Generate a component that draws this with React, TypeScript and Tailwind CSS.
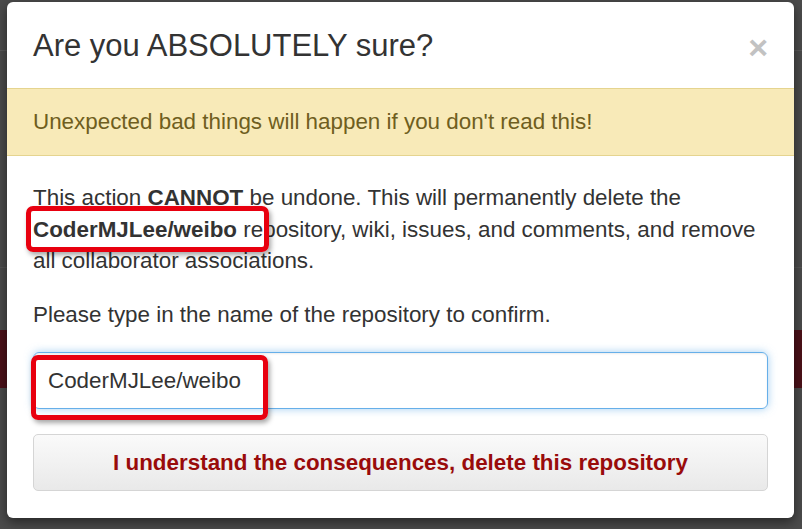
import React from 'react';

export default function App() {
  return (
    <div className="relative h-[529px] w-[802px] overflow-hidden bg-[#4b4b4b] font-['Liberation_Sans',Arial,sans-serif]">
      {/* page behind the overlay */}
      <div className="pt-[50px]">
        <div className="h-px bg-[#5a5a5a]" />
        <div className="mt-[216px] h-px bg-[#555]" />
        <div className="mt-[62px] h-[58px] bg-[#4c1119]" />
      </div>

      {/* modal */}
      <div className="absolute left-[7px] top-[2px] h-[516px] w-[787px] overflow-hidden rounded-[6px] bg-white shadow-[0_4px_12px_rgba(0,0,0,0.5)]">
        <div className="flex h-[86px] items-center justify-between pl-[26px] pr-[26px]">
          <h1 className="text-[31px] leading-none text-[#333]">Are you ABSOLUTELY sure?</h1>
          <span className="mt-[4px] text-[34px] font-bold leading-none text-[#c2c2c2]">×</span>
        </div>

        <div className="flex h-[68px] items-center border-y border-[#e5d48f] bg-[#f8eab8] px-[26px] text-[22.4px] text-[#6f5e20]">
          Unexpected bad things will happen if you don't read this!
        </div>

        <div className="px-[26px] pt-[26px] text-[22.4px] leading-[31.5px] text-[#333]">
          <p>
            This action <strong>CANNOT</strong> be undone. This will permanently delete the{' '}
            <strong>CoderMJLee/weibo</strong> repository, wiki, issues, and comments, and remove all
            collaborator associations.
          </p>
          <p className="mt-[22px]">Please type in the name of the repository to confirm.</p>

          <input
            readOnly
            value="CoderMJLee/weibo"
            className="mt-[22px] block h-[57px] w-full rounded-[6px] border border-[#66afe9] px-[14px] text-[22.4px] text-[#333] shadow-[inset_0_1px_2px_rgba(0,0,0,0.075),0_0_8px_rgba(102,175,233,0.6)] outline-none"
          />

          <button className="mt-[25px] flex h-[57px] w-full items-center justify-center rounded-[5px] border border-[#d5d5d5] bg-gradient-to-b from-[#fafafa] to-[#e9e9e9] text-[22.4px] font-bold text-[#990b0b]">
            I understand the consequences, delete this repository
          </button>
        </div>
      </div>

      {/* red annotation boxes */}
      <div className="absolute left-[26px] top-[206px] h-[46px] w-[243px] rounded-[7px] border-[5px] border-[#e8000f] shadow-[2px_3px_5px_rgba(0,0,0,0.35)]" />
      <div className="absolute left-[31px] top-[355px] h-[65px] w-[237px] rounded-[7px] border-[5px] border-[#e8000f] shadow-[2px_3px_5px_rgba(0,0,0,0.35)]" />
    </div>
  );
}
